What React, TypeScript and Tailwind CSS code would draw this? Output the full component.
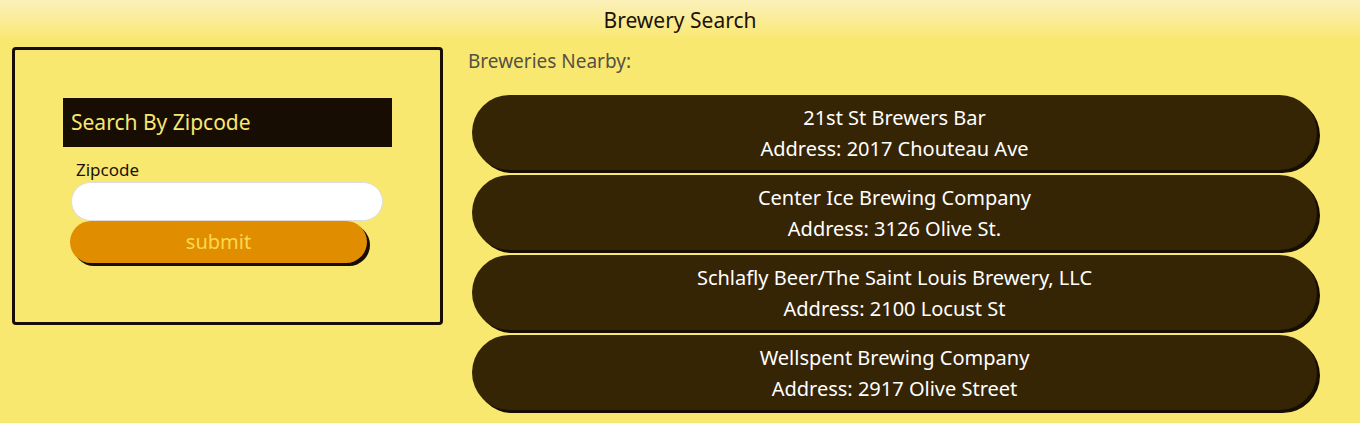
const breweries = [
  { name: "21st St Brewers Bar", address: "2017 Chouteau Ave" },
  { name: "Center Ice Brewing Company", address: "3126 Olive St." },
  { name: "Schlafly Beer/The Saint Louis Brewery, LLC", address: "2100 Locust St" },
  { name: "Wellspent Brewing Company", address: "2917 Olive Street" },
];

export default function App() {
  return (
    <div className="min-h-[423px] bg-[#f9e86f] font-['Noto_Sans',sans-serif]">
      {/* Header */}
      <header className="h-[40px] flex items-center justify-center bg-gradient-to-b from-[#fbf0b8] to-[#f9e86f]">
        <h1 className="text-[21px] text-[#1c1206] leading-none">Brewery Search</h1>
      </header>

      <div className="flex items-start pt-[7px] pl-[12px] pr-[43px]">
        {/* Search card */}
        <div className="w-[431px] h-[278px] shrink-0 border-[3px] border-[#170d02] rounded-[4px] p-[48px]">
          <div className="h-[49px] bg-[#170d02] flex items-center px-[8px]">
            <h2 className="text-[21px] text-[#f9e86f]">Search By Zipcode</h2>
          </div>
          <form className="flex flex-col" onSubmit={(e) => e.preventDefault()}>
            <label className="mt-[12px] ml-[13px] text-[17px] leading-[22px] text-[#1c1206]">Zipcode</label>
            <input
              type="text"
              className="mt-[1px] ml-[8px] w-[312px] h-[39px] bg-white rounded-full border border-[#dcdcdc] outline-none px-4"
            />
            <button
              type="submit"
              className="ml-[7px] w-[297px] h-[42px] rounded-full bg-[#e08e00] text-[#fcd84f] text-[20px] shadow-[3px_3px_0_#170d02]"
            >
              submit
            </button>
          </form>
        </div>

        {/* Results */}
        <div className="flex-1 ml-[25px] pt-[1px]">
          <p className="text-[19px] leading-[26px] text-[#555046]">Breweries Nearby:</p>
          <div className="mt-[21px] ml-[4px] flex flex-col gap-[5px]">
            {breweries.map((b) => (
              <div
                key={b.name}
                className="h-[75px] rounded-full bg-[#362505] shadow-[3px_3px_0_#170d02] flex flex-col items-center justify-center text-white text-[20px] leading-[31px]"
              >
                <span>{b.name}</span>
                <span>Address: {b.address}</span>
              </div>
            ))}
          </div>
        </div>
      </div>
    </div>
  );
}
